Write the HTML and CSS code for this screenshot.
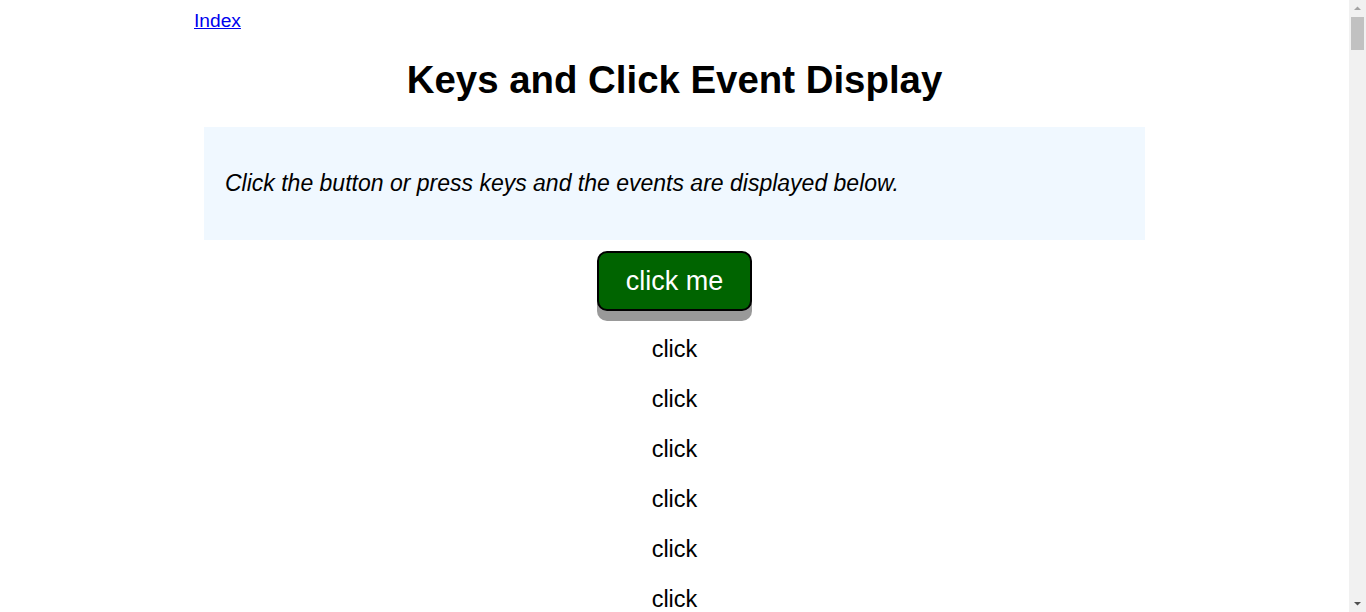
FILE: index.html
```html
<!DOCTYPE html>
<html>
<head>
<meta charset="utf-8">
<title>Keys and Click Event Display</title>
<link rel="stylesheet" href="styles.css">
</head>
<body>
<div class="viewport">
  <main class="main">
    <div class="page">
      <a class="nav" href="#">Index</a>
      <h1 class="title">Keys and Click Event Display</h1>
      <div class="intro">
        <p>Click the button or press keys and the events are displayed below.</p>
      </div>
      <div class="actions">
        <button class="btn" type="button">click me</button>
      </div>
      <div class="events">
        <div class="event">click</div>
        <div class="event">click</div>
        <div class="event">click</div>
        <div class="event">click</div>
        <div class="event">click</div>
        <div class="event">click</div>
      </div>
    </div>
  </main>
  <div class="scrollbar" aria-hidden="true">
    <div class="sb-btn">
      <svg width="17" height="17" viewBox="0 0 17 17"><path d="M5 10h7L8.5 6.5z" fill="#a3a3a3"/></svg>
    </div>
    <div class="sb-thumb"></div>
    <div class="sb-track"></div>
    <div class="sb-btn">
      <svg width="17" height="17" viewBox="0 0 17 17"><path d="M5 7h7L8.5 10.5z" fill="#505050"/></svg>
    </div>
  </div>
</div>
</body>
</html>
```
FILE: styles.css
```css
html, body {
  margin: 0;
  padding: 0;
  height: 100%;
  overflow: hidden;
}
body {
  font-family: "Liberation Sans", Arial, sans-serif;
  background: #fff;
  color: #000;
}
.viewport {
  display: flex;
  height: 100vh;
}
.main {
  flex: 1;
  overflow: hidden;
  padding: 8px;
}
.page {
  width: 961px;
  margin: 0 auto;
}
.nav {
  display: inline-block;
  font-size: 19.2px;
  line-height: 25px;
  color: #0000ee;
  text-decoration: underline;
}
.title {
  font-size: 38.4px;
  line-height: 44px;
  font-weight: bold;
  text-align: center;
  margin: 25px 0 25px;
}
.intro {
  margin: 0 10px;
  background: #f0f8ff;
  padding: 43px 21px 44px;
}
.intro p {
  margin: 0;
  font-size: 23px;
  line-height: 26px;
  font-style: italic;
}
.actions {
  display: flex;
  justify-content: center;
  margin-top: 11px;
}
.btn {
  width: 155px;
  height: 60px;
  background: #006400;
  color: #fff;
  border: 2px solid #000;
  border-radius: 10px;
  box-shadow: 0 10px 0 #999;
  font-family: "Liberation Sans", Arial, sans-serif;
  font-size: 27px;
  padding: 0;
}
.events {
  margin-top: 25px;
  display: flex;
  flex-direction: column;
  align-items: center;
  gap: 23px;
}
.event {
  font-size: 23.5px;
  line-height: 27px;
}
.scrollbar {
  width: 17px;
  flex: none;
  background: #f1f1f1;
  display: flex;
  flex-direction: column;
}
.sb-btn {
  height: 17px;
  flex: none;
}
.sb-btn svg {
  display: block;
}
.sb-thumb {
  height: 33px;
  margin: 0 2px;
  background: #c1c1c1;
  flex: none;
}
.sb-track {
  flex: 1;
}
```
